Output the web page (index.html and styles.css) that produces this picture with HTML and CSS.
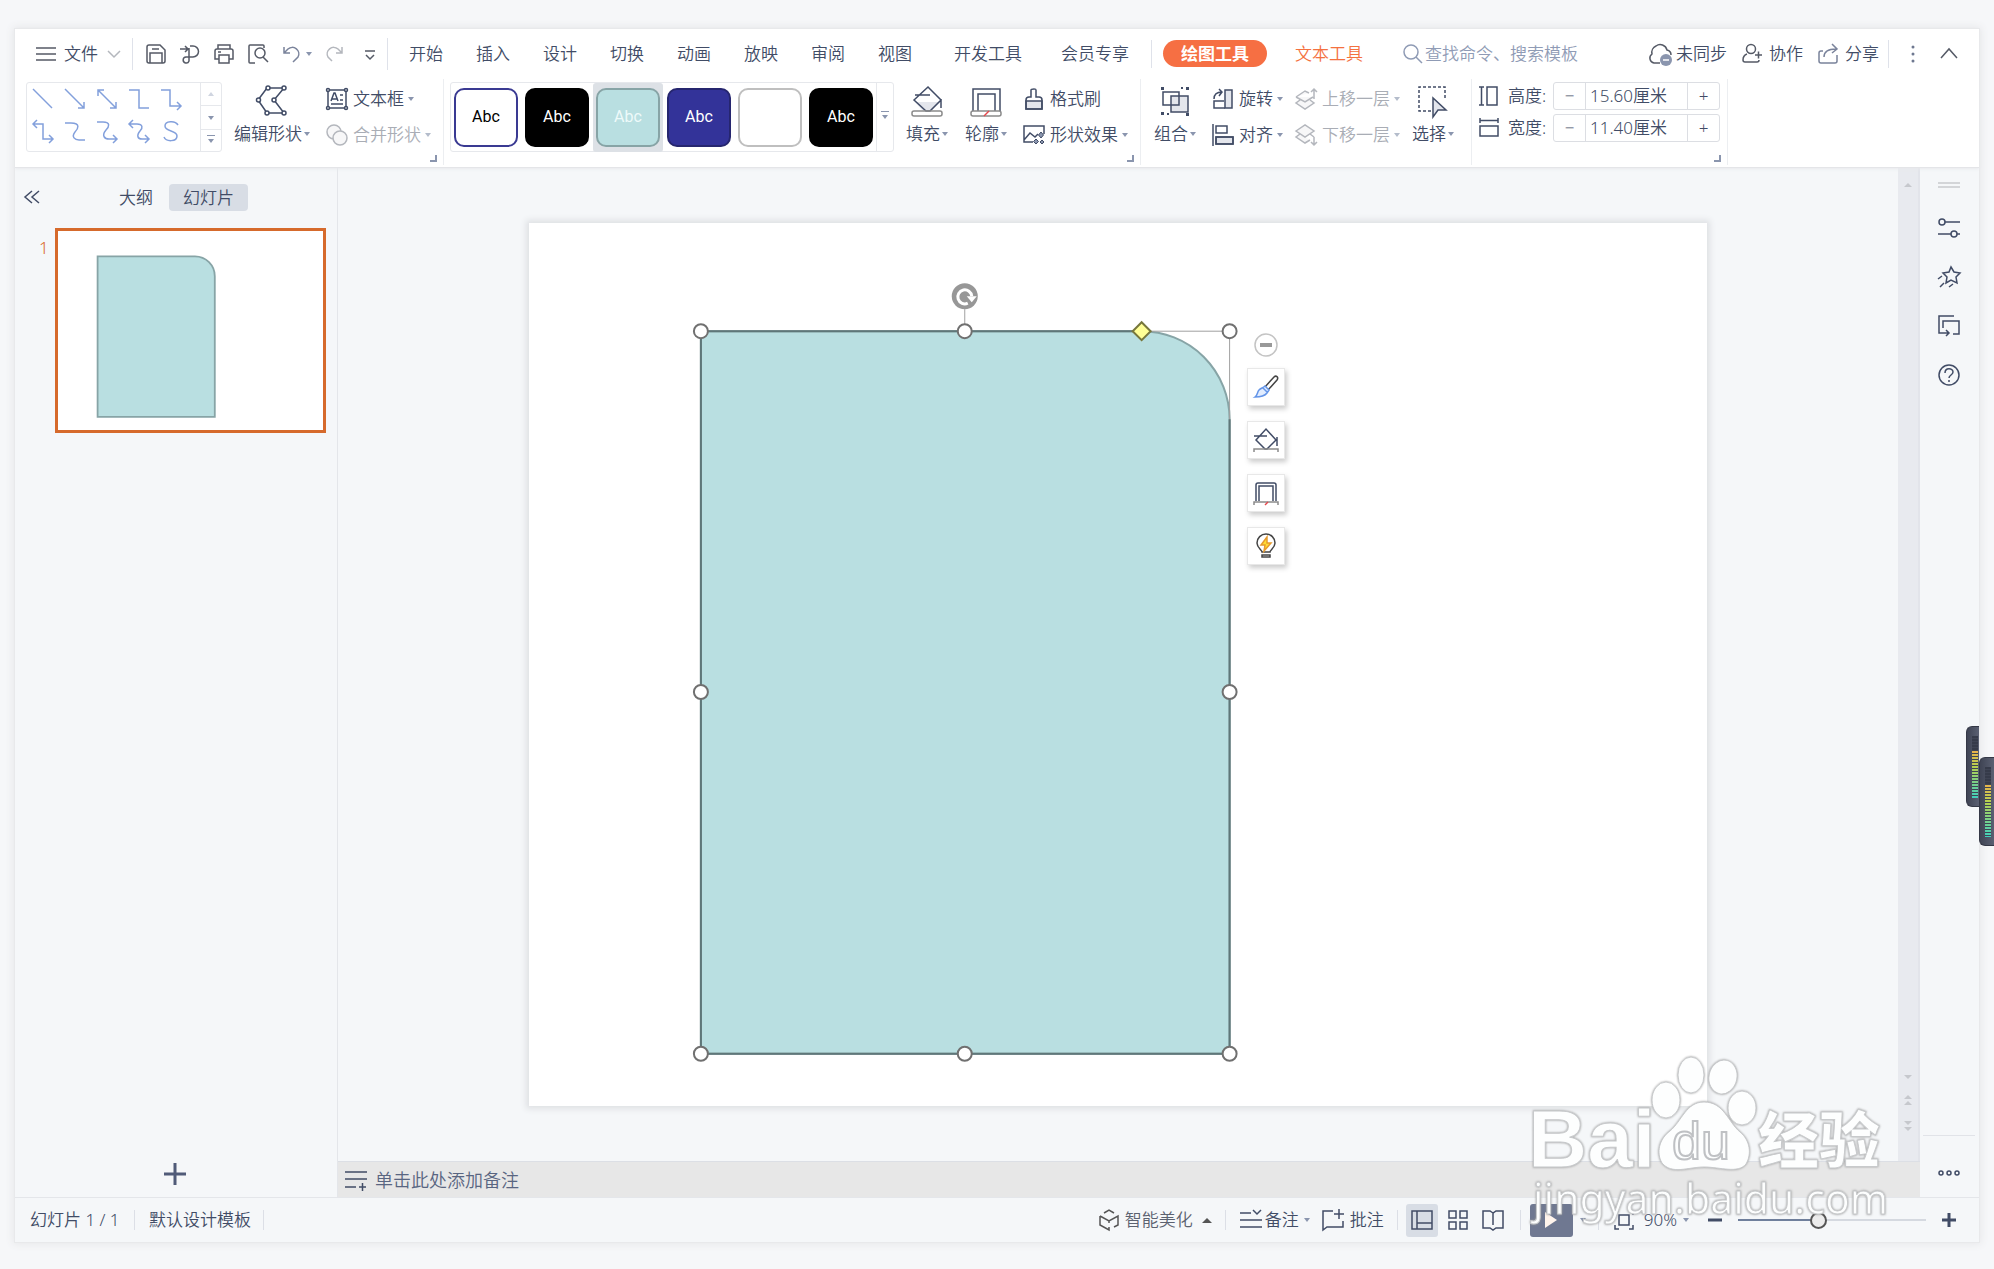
FILE: index.html
```html
<!DOCTYPE html>
<html lang="zh-CN">
<head>
<meta charset="utf-8">
<title>演示文稿</title>
<link rel="stylesheet" href="styles.css">
</head>
<body>
<div class="app">
  <header class="header">
    <div class="menubar">
      <button class="file-btn" type="button">
        <svg class="i20" viewBox="0 0 20 20"><path d="M0 4h20M0 10h20M0 16h20"/></svg>
        <span>文件</span>
        <svg class="i14" viewBox="0 0 14 14"><path class="pale" d="M1 4l6 6 6-6"/></svg>
      </button>
      <span class="vline"></span>
      <div class="quick">
        <button type="button" aria-label="保存"><svg class="i20" viewBox="0 0 20 20"><path d="M1 3a2 2 0 0 1 2-2h11l5 5v11a2 2 0 0 1-2 2H3a2 2 0 0 1-2-2zM4 19V9h12v10M6 5h7"/></svg></button>
        <button type="button" aria-label="输出"><svg class="i20" viewBox="0 0 20 20"><path d="M0 5h8M5 2l3 3-3 3M10 2h3a5 5 0 0 1 0 11H6a3 3 0 1 0 3 4V4"/></svg></button>
        <button type="button" aria-label="打印"><svg class="i20" viewBox="0 0 20 20"><path d="M4 5V1h12v4M5 15H1V7a2 2 0 0 1 2-2h14a2 2 0 0 1 2 2v8h-4M5 11h10v8H5zM4 8h3"/></svg></button>
        <button type="button" aria-label="打印预览"><svg class="i20" viewBox="0 0 20 20"><path d="M7 19H2a1 1 0 0 1-1-1V2a1 1 0 0 1 1-1h13a1 1 0 0 1 1 1v2M15 13l5 5"/><circle cx="12" cy="9" r="5"/></svg></button>
        <button type="button" class="undo" aria-label="撤销"><svg class="i20" viewBox="0 0 20 20"><path class="slate" d="M2 3v6h6M2 9l4-4a6.500 6.500 0 0 1 10 8l-5 5"/></svg><i class="caret"></i></button>
        <button type="button" aria-label="恢复"><svg class="i20" viewBox="0 0 20 20"><path class="pale" d="M16 3v6h-6M16 9l-4-4a6.500 6.500 0 0 0-10 8l4 4"/></svg></button>
        <button type="button" aria-label="自定义"><svg class="i20" viewBox="0 0 20 20"><path d="M5 7h10M6 11l4 4 4-4"/></svg></button>
      </div>
      <span class="vline"></span>
      <nav class="tabs">
        <a href="#">开始</a><a href="#">插入</a><a href="#">设计</a><a href="#">切换</a><a href="#">动画</a><a href="#">放映</a><a href="#">审阅</a><a href="#">视图</a>
      </nav>
      <nav class="tabs tabs-wide"><a href="#">开发工具</a><a href="#">会员专享</a></nav>
      <span class="vline short"></span>
      <nav class="tabs tabs-tools"><a class="active" href="#">绘图工具</a><a class="orange" href="#">文本工具</a></nav>
      <label class="search">
        <svg class="i20" viewBox="0 0 20 20"><g class="haze"><circle cx="8" cy="8" r="7"/><path d="M13 13l6 6"/></g></svg>
        <input type="text" placeholder="查找命令、搜索模板" aria-label="搜索">
      </label>
      <div class="account">
        <button type="button" class="sync"><svg class="i24" viewBox="0 0 24 24"><path d="M12 21H6a5 5 0 0 1-2-9 7 7 0 0 1 4-8 7 7 0 0 1 11 4 5 5 0 0 1 4 5"/><circle cx="18" cy="18" r="6" class="solid-slate"/><path class="white" d="M15 18h6"/></svg><span>未同步</span></button>
        <button type="button"><svg class="i21" viewBox="0 0 21 21"><circle cx="9" cy="6" r="4.500"/><path d="M5 11c-3 1-4 4-4 6 0 1 1 2 2 2h12c1 0 2-1 2-2M13 12h7M16.500 8.500v7"/></svg><span>协作</span></button>
        <button type="button"><svg class="i21" viewBox="0 0 21 21"><path class="slate" d="M5 8H3a2 2 0 0 0-2 2v8a2 2 0 0 0 2 2h14a2 2 0 0 0 2-2v-6M6 14c0-5 3-8 12-8M14 1l5 5-5 4"/></svg><span>分享</span></button>
        <span class="vline short"></span>
        <button type="button" class="dots" aria-label="更多"><svg width="4" height="20" viewBox="0 0 4 20"><g class="fill-slate"><circle cx="2" cy="3" r="1.500"/><circle cx="2" cy="10" r="1.500"/><circle cx="2" cy="17" r="1.500"/></g></svg></button>
        <button type="button" class="collapse" aria-label="收起功能区"><svg width="18" height="18" viewBox="0 0 18 18"><path d="M1 13l8-9 8 9"/></svg></button>
      </div>
    </div>

    <div class="ribbon">
      <section class="group g-shape">
        <div class="lines">
          <div class="line-grid">
            <button type="button" aria-label="直线"><svg class="i20" viewBox="0 0 20 20"><path d="M0 0l19 19"/></svg></button>
            <button type="button" aria-label="箭头"><svg class="i20" viewBox="0 0 20 20"><path d="M0 0l19 19M19 13v6h-6"/></svg></button>
            <button type="button" aria-label="双箭头"><svg class="i20" viewBox="0 0 20 20"><path d="M1 1l18 18M19 13v6h-6M1 7V1h6"/></svg></button>
            <button type="button" aria-label="肘形"><svg class="i20" viewBox="0 0 20 20"><path d="M0 1h10v18h10"/></svg></button>
            <button type="button" aria-label="肘形箭头"><svg class="i20" viewBox="0 0 20 20"><path d="M0 1h9v16h10M16 13l4 4-4 4"/></svg></button>
            <button type="button" aria-label="肘形双箭头"><svg class="i20" viewBox="0 0 20 20"><path d="M1 3h9v15h9M4-1L0 3l4 4M16 14l4 4-4 4"/></svg></button>
            <button type="button" aria-label="曲线"><svg class="i20" viewBox="0 0 20 20"><path d="M0 2h6c10 0 7 6 4 9-4 5 0 8 4 8h6"/></svg></button>
            <button type="button" aria-label="曲线箭头"><svg class="i20" viewBox="0 0 20 20"><path d="M0 1h6c8 0 6 5 3 8-5 6-1 9 3 9h7M16 14l4 4-4 4"/></svg></button>
            <button type="button" aria-label="曲线双箭头"><svg class="i20" viewBox="0 0 20 20"><path d="M1 3h7c6 0 6 4 3 7-4 5-2 8 2 8h6M4-1L0 3l4 4M16 14l4 4-4 4"/></svg></button>
            <button type="button" aria-label="自由曲线"><svg class="i20" viewBox="0 0 20 20"><path d="M17 4c-3-5-13-4-13 1 0 6 12 4 12 10 0 6-11 6-13 1"/></svg></button>
          </div>
          <div class="scroll-col">
            <button type="button" aria-label="上一行"><i class="caret up faint"></i></button>
            <button type="button" aria-label="下一行"><i class="caret"></i></button>
            <button type="button" aria-label="更多线条"><i class="caret bar"></i></button>
          </div>
        </div>
        <button type="button" class="big edit"><svg class="i32" viewBox="0 0 32 32"><path d="M11 3h17M28 3L18 15M18 15l10 13M28 28H11M11 28L2 15M2 15L11 3"/><g class="node"><circle cx="12" cy="3" r="2"/><circle cx="28" cy="3" r="2"/><circle cx="18" cy="15" r="2"/><circle cx="2.500" cy="15" r="2"/><circle cx="11" cy="28" r="2"/><circle cx="28" cy="28" r="2"/></g></svg><span class="lbl">编辑形状<i class="caret"></i></span></button>
        <div class="stack">
          <button type="button" class="small"><svg class="i22" viewBox="0 0 22 22"><path d="M2 2h18v18H2zM5 13l3-8h1l3 8M6 11h5M14 7h3M14 12h3M5 16h12"/><g class="node"><circle cx="2" cy="2" r="1.500"/><circle cx="20" cy="2" r="1.500"/><circle cx="2" cy="20" r="1.500"/><circle cx="20" cy="20" r="1.500"/></g></svg><span>文本框</span><i class="caret"></i></button>
          <button type="button" class="small off"><svg class="i22" viewBox="0 0 22 22"><circle cx="8" cy="8" r="7"/><circle cx="14" cy="14" r="7"/></svg><span>合并形状</span><i class="caret"></i></button>
        </div>
        <i class="launcher"></i>
      </section>

      <section class="group g-style">
        <div class="styles">
          <button type="button" class="tile t-outline">Abc</button>
          <button type="button" class="tile t-black">Abc</button>
          <span class="picked"><button type="button" class="tile t-teal">Abc</button></span>
          <button type="button" class="tile t-navy">Abc</button>
          <button type="button" class="tile t-empty" aria-label="无填充"></button>
          <button type="button" class="tile t-black">Abc</button>
          <button type="button" class="styles-more" aria-label="更多样式"><i class="caret bar"></i></button>
        </div>
        <button type="button" class="big"><svg class="i32" viewBox="0 0 32 32"><path class="tint" stroke="none" d="M4 17h26L20 26h-8z"/><path d="M3 15L17 2l13 13-11 11h-4zM4 10h15M30 14v9"/><rect class="grey" x="1" y="26" width="30" height="5" rx="2"/></svg><span class="lbl">填充<i class="caret"></i></span></button>
        <button type="button" class="big outline"><svg class="i32" viewBox="0 0 32 32"><path d="M3 26V4h27v22M8 26V9h17v17"/><rect class="grey" x="1" y="26" width="30" height="5" rx="2"/><path class="red" d="M14 31l5-5"/></svg><span class="lbl">轮廓<i class="caret"></i></span></button>
        <div class="stack">
          <button type="button" class="small"><svg class="i22" viewBox="0 0 22 22"><path class="tint" d="M3 13h16v8H3z"/><path d="M3 21V12c0-2 1-3 3-3h2V2c0-1 1-1 3-1s2 0 2 1v7h3c2 0 3 1 3 3v9z"/></svg><span>格式刷</span></button>
          <button type="button" class="small"><svg class="i22" viewBox="0 0 22 22"><path d="M10 18H1V2h20v8M1 16l6-7 5 4 3-3"/><path class="spark" d="M18 8l2.500 3-2.500 3-2.500-3zM13 15l2.500 2.500L13 20l-2.500-2.500zM19 16l2 2-2 2-2-2z"/></svg><span>形状效果</span><i class="caret"></i></button>
        </div>
        <i class="launcher"></i>
      </section>

      <section class="group g-arrange">
        <button type="button" class="big"><svg class="i32" viewBox="0 0 32 32"><path class="tint" stroke="none" d="M12 11h17v16H12z"/><path d="M4 7h16v13H4zM12 11h17v16H12z"/><path class="dot" d="M2 2h3v3H2zM22 2h2v2h-2zM27 2h3v3h-3zM2 27h3v3H2zM8 28h2v2H8zM27 28h3v3h-3z"/></svg><span class="lbl">组合<i class="caret"></i></span></button>
        <div class="stack">
          <button type="button" class="small"><svg class="i22" viewBox="0 0 22 22"><path class="tint" d="M13 2h7v18h-7z"/><path d="M12 13H2v7h11M2 11c0-4 2-7 8-7M7 1l3 3-3 4"/></svg><span>旋转</span><i class="caret"></i></button>
          <button type="button" class="small"><svg class="i22" viewBox="0 0 22 22"><path class="tint" d="M4 13h17v7H4z"/><path d="M1 0v22M4 2h11v7H4zM4 13h17v7H4z"/></svg><span>对齐</span><i class="caret"></i></button>
        </div>
        <div class="stack near">
          <button type="button" class="small off"><svg class="i22" viewBox="0 0 22 22"><path d="M1 9l9-6 4 2M1 9l9 5 8-5M5 12l-4 3 9 6 9-6-4-3M19 11V1M16 4l3-3 3 3"/></svg><span>上移一层</span><i class="caret"></i></button>
          <button type="button" class="small off"><svg class="i22" viewBox="0 0 22 22"><path d="M1 7l9-6 9 6-9 6zM5 10l-4 3 9 6 5-3M15 10l4 3M19 13v8M16 18l3 3 3-3"/></svg><span>下移一层</span><i class="caret"></i></button>
        </div>
        <button type="button" class="big pick"><svg class="i32" viewBox="0 0 32 32"><path stroke-dasharray="3 2" d="M14 26H2V2h26v13"/><path class="tint" d="M16 13v19l5-7h8z"/></svg><span class="lbl">选择<i class="caret"></i></span></button>
      </section>

      <section class="group g-size">
        <div class="field">
          <svg class="i20" viewBox="0 0 20 20"><path d="M0 1h5M2.500 1v18M0 19h5M8 1h10v18H8z"/></svg>
          <label for="h">高度:</label>
          <div class="spin"><button type="button" aria-label="减小高度">−</button><input id="h" type="text" value="15.60厘米"><button type="button" aria-label="增大高度">+</button></div>
        </div>
        <div class="field">
          <svg class="i20" viewBox="0 0 20 20"><path d="M1 0v5M1 2.500h18M19 0v5M1 8h18v10H1z"/></svg>
          <label for="w">宽度:</label>
          <div class="spin"><button type="button" aria-label="减小宽度">−</button><input id="w" type="text" value="11.40厘米"><button type="button" aria-label="增大宽度">+</button></div>
        </div>
        <i class="launcher"></i>
      </section>
    </div>
  </header>

  <main class="main">
    <aside class="sidebar">
      <div class="side-head">
        <button type="button" class="fold" aria-label="折叠"><svg width="16" height="16" viewBox="0 0 16 16"><path d="M8 1L1 7l7 6M15 1L8 7l7 6"/></svg></button>
        <button type="button" class="side-tab">大纲</button>
        <button type="button" class="side-tab on">幻灯片</button>
      </div>
      <div class="thumb-row">
        <span class="num">1</span>
        <div class="thumb"><svg viewBox="0 0 1178 883"><path class="shape thick" d="M176 113H609A88 88 0 0 1 697 201V826H176z"/></svg></div>
      </div>
      <button type="button" class="add" aria-label="新建幻灯片"><svg class="i22" viewBox="0 0 22 22"><path d="M0 11h22M11 0v22"/></svg></button>
    </aside>

    <div class="center">
      <div class="work">
        <div class="canvas">
          <div class="slide">
            <svg class="drawing" viewBox="0 0 1178 883">
              <path class="shape" d="M172 108H613A88 88 0 0 1 701 196V831H172z"/>
              <rect class="bounds" x="172" y="108" width="529" height="723"/>
              <path class="bounds" d="M436 86v16"/>
              <path class="edge" d="M613 108H172V831H701V196"/>
              <circle class="rot" cx="436" cy="73" r="13"/>
              <path class="rot-arrow" d="M439 80a7 7 0 1 1 4-7"/><path class="rot-head" d="M438 73h10l-5 6z"/>
              <g class="handle"><circle cx="172" cy="108" r="7"/><circle cx="436" cy="108" r="7"/><circle cx="701" cy="108" r="7"/><circle cx="172" cy="469" r="7"/><circle cx="701" cy="469" r="7"/><circle cx="172" cy="831" r="7"/><circle cx="436" cy="831" r="7"/><circle cx="701" cy="831" r="7"/></g>
              <path class="adjust" d="M613 99l9 9-9 9-9-9z"/>
            </svg>
            <div class="floaters">
              <button type="button" class="round" aria-label="收起"><svg width="24" height="24" viewBox="0 0 24 24"><circle cx="12" cy="12" r="11"/><path d="M6 12h12"/></svg></button>
              <button type="button" aria-label="样式"><svg class="i26" viewBox="0 0 26 26"><path class="dark" d="M12 13L21 3c2-2 5 0 3 3l-9 10z"/><path class="blue" d="M12 12l4 4-2 3c-3 4-8 4-12 4 3-2 2-5 4-7 2-2 4-2 6-4zM10 14l4 4"/></svg></button>
              <button type="button" aria-label="填充"><svg class="i26" viewBox="0 0 26 26"><path d="M3 13L13 2l10 11-9 9h-2zM1 9h13M24 10v9"/><path class="grey" d="M1 25v-3h24v3"/></svg></button>
              <button type="button" aria-label="轮廓"><svg class="i26" viewBox="0 0 26 26"><path d="M3 21V5a2 2 0 0 1 2-2h16a2 2 0 0 1 2 2v16M6 21V6h14v15"/><path class="grey" d="M1 25v-3h24v3"/><path class="red" d="M12 25l3-3"/></svg></button>
              <button type="button" aria-label="智能"><svg class="i26" viewBox="0 0 26 26"><path class="dark" d="M9 19c0-2-5-4-5-9a9 9 0 0 1 18 0c0 5-5 7-5 9zM9 22h8v2H9z"/><path class="bolt" d="M14 4l-6 8h4l-1 6 7-8h-4z"/></svg></button>
            </div>
          </div>
        </div>
        <div class="vscroll">
          <i class="caret up mute"></i>
          <div class="vbottom"><i class="caret mute"></i><span><i class="caret up mute"></i><i class="caret up mute"></i></span><span><i class="caret mute"></i><i class="caret mute"></i></span></div>
        </div>
      </div>
      <div class="notes"><svg class="i22" viewBox="0 0 22 22"><path d="M0 3h22M0 10h22M0 18h11M14 18h7M17.500 14v8"/></svg><span>单击此处添加备注</span></div>
    </div>

    <aside class="rail">
      <span class="grip"></span>
      <button type="button" aria-label="属性"><svg class="i22" viewBox="0 0 22 22"><path d="M7 5h15M0 17h13M19 17h3"/><circle cx="4" cy="5" r="3"/><circle cx="16" cy="17" r="3"/></svg></button>
      <button type="button" aria-label="动画"><svg class="i22" viewBox="0 0 22 22"><path d="M13 1l3 5 6 1-4 4 1 6-6-3-5 3 1-6-4-4 6-1zM0 13l4-3M2 21l4-4M11 21l4-3"/></svg></button>
      <button type="button" aria-label="切换"><svg class="i22" viewBox="0 0 22 22"><path d="M16 1H1v17h10M8 15l3 3-3 3M5 13V6h16v13h-6"/></svg></button>
      <button type="button" aria-label="帮助"><svg class="i22" viewBox="0 0 22 22"><circle cx="11" cy="11" r="10"/><path d="M7 9c0-6 8-5 8-1 0 3-4 3-4 6M11 16v2"/></svg></button>
      <button type="button" class="rail-more" aria-label="更多"><svg class="i22" viewBox="0 0 22 22"><circle cx="3" cy="11" r="2"/><circle cx="11" cy="11" r="2"/><circle cx="19" cy="11" r="2"/></svg></button>
    </aside>
  </main>

  <footer class="status">
    <span class="s-page">幻灯片 1 / 1</span>
    <span class="vline tiny"></span>
    <span class="s-tpl">默认设计模板</span>
    <span class="vline tiny"></span>
    <div class="s-right">
      <button type="button" class="beauty"><svg class="i20" viewBox="0 0 20 20"><path class="dim" d="M5 3l5-3 5 3M1 6l9 5 9-5v9l-4 2M1 6v9l9 5v-3M10 11v2"/></svg><span>智能美化</span><i class="caret up dark"></i></button>
      <span class="vline tiny"></span>
      <button type="button" class="s-note"><svg class="i22" viewBox="0 0 22 22"><path d="M0 4h11M0 11h22M0 18h22M13 1l4 4 4-4"/></svg><span>备注</span><i class="caret"></i></button>
      <button type="button" class="s-comment"><svg class="i22" viewBox="0 0 22 22"><path d="M11 2H1v19l4-3h16v-6M17 0v10M12 5h10"/></svg><span>批注</span></button>
      <span class="vline tiny"></span>
      <div class="views">
        <button type="button" class="view on" aria-label="普通视图"><svg class="i22" viewBox="0 0 22 22"><path d="M1 2h20v18H1zM6 2v18M6 14h15"/></svg></button>
        <button type="button" class="view-grid" aria-label="幻灯片浏览"><svg class="i20" viewBox="0 0 20 20"><path d="M1 1h7v7H1zM12 1h7v7h-7zM1 12h7v7H1zM12 12h7v7h-7z"/></svg></button>
        <button type="button" class="view-read" aria-label="阅读视图"><svg class="i22" viewBox="0 0 22 22"><path d="M11 4L8 2H1v17h7l3 2 3-2h7V2h-7zM11 4v12"/></svg></button>
      </div>
      <span class="vline tiny"></span>
      <button type="button" class="play" aria-label="播放"><svg width="14" height="18" viewBox="0 0 14 18"><path d="M1 1l12 8-12 8z"/></svg></button>
      <i class="caret play-caret"></i>
      <span class="vline tiny"></span>
      <button type="button" class="fit" aria-label="适应窗口"><svg class="i20" viewBox="0 0 20 20"><path d="M1 5V1h4M15 1h4v4M1 15v4h4M15 19h4v-4M5 5h10v10H5z"/></svg></button>
      <button type="button" class="zoom">90%<i class="caret"></i></button>
      <button type="button" class="z-minus" aria-label="缩小"><svg class="i14 bold" viewBox="0 0 14 14"><path d="M0 7h14"/></svg></button>
      <input class="slider" type="range" min="0" max="100" value="42" aria-label="缩放">
      <button type="button" class="z-plus" aria-label="放大"><svg class="i14 bold" viewBox="0 0 14 14"><path d="M0 7h14M7 0v14"/></svg></button>
    </div>
  </footer>
</div>

<div class="meter meter-a"><i></i></div>
<div class="meter meter-b"><i></i></div>

<svg class="watermark" width="370" height="190" viewBox="0 0 370 190">
  <g class="wm">
    <text class="wm-bai" x="0" y="121">Bai</text>
    <ellipse cx="138" cy="54" rx="14" ry="18"/><ellipse cx="163" cy="29" rx="13" ry="18"/><ellipse cx="195" cy="31" rx="14" ry="17" transform="rotate(12 195 31)"/><ellipse cx="214" cy="62" rx="14" ry="17"/>
    <path d="M176 56c20 0 24 20 36 30 10 8 12 22 6 32-8 10-26 3-42 3s-32 8-42-4c-6-10-3-24 8-32 12-10 16-29 34-29z"/>
    <text class="wm-du" x="144" y="113">du</text>
    <text class="wm-cn" x="230" y="117">经验</text>
    <text class="wm-url" x="5" y="168">jingyan.baidu.com</text>
  </g>
</svg>
</body>
</html>
```
FILE: styles.css
```css
* { box-sizing: border-box; }
body {
  margin: 0;
  padding: 29px 15px 27px;
  min-height: 100vh;
  position: relative;
  overflow-x: hidden;
  background: #f6f7f9;
  color: #414c66;
  font: 17px/22px "Noto Sans", "Noto Sans CJK SC", sans-serif;
  font-weight: 350;
}
button, input {
  font: inherit;
  color: inherit;
  background: none;
  border: 0;
  padding: 0;
  margin: 0;
}
button { display: flex; align-items: center; white-space: nowrap; flex: none; }
a { color: inherit; text-decoration: none; }
i { flex: none; }
svg { fill: none; stroke: #414c66; stroke-width: 1.5; flex: none; display: block; overflow: visible; }
.i14 { width: 14px; height: 14px; }
.i20 { width: 20px; height: 20px; }
.i21 { width: 21px; height: 21px; }
.i22 { width: 22px; height: 22px; }
.i24 { width: 24px; height: 24px; }
.i26 { width: 26px; height: 26px; }
.i32 { width: 32px; height: 32px; }
.pale { stroke: #b4b7bd; }
.slate { stroke: #7a839b; }
.haze { stroke: #8f9bb5; }
.white { stroke: #fff; }
.dim { stroke: #555; }
.grey { stroke: #8a8a8a; }
.red { stroke: #e5484d; }
.tint { fill: #e4e6ec; }
.solid-slate { fill: #8a95ae; stroke: none; }
.fill-slate { fill: #6e7890; stroke: none; }
.node { fill: #fff; }
.dot { fill: #414c66; stroke: none; }
.spark { stroke-width: 1; fill: #8a95ae; }
.bold { stroke-width: 3; }

.caret {
  display: inline-block;
  width: 0;
  border: solid transparent;
  border-width: 4px 3px 0;
  border-top-color: #8a95ae;
}
.caret.up { border-width: 0 3px 4px; border-bottom-color: #8a95ae; }
.caret.faint { border-bottom-color: #d0d5e0; }
.caret.mute { border-left-width: 4px; border-right-width: 4px; border-top-color: #c6c8cd; border-bottom-color: #c6c8cd; }
.caret.dark { border-width: 0 5px 5px; border-bottom-color: #555; }
.caret.bar { position: relative; }
.caret.bar::before {
  content: "";
  position: absolute;
  left: -4px;
  top: -8px;
  width: 8px;
  height: 1px;
  background: #8a95ae;
}
.vline { width: 1px; height: 32px; background: #dfe2ea; flex: none; }
.vline.short { height: 28px; }
.vline.tiny { height: 20px; background: #dcdfe6; }

.app {
  display: flex;
  flex-direction: column;
  min-height: calc(100vh - 56px);
  background: #f5f7f9;
  box-shadow: 0 0 0 1px #e8e9eb, 0 0 8px 2px #e6e7e9;
}
.header { background: #fff; border-bottom: 1px solid #e4e5e8; box-shadow: 0 1px 3px #e8e9ec; position: relative; }

.menubar { display: flex; align-items: center; height: 49px; padding: 0 21px; white-space: nowrap; }
.menubar svg { stroke: #555a66; }
.file-btn span { margin: 0 9px 0 8px; }
.file-btn + .vline { margin: 0 13px 0 11px; }
.quick { display: flex; align-items: center; gap: 14px; margin-right: 7px; }
.undo { gap: 4px; }
.tabs { display: flex; gap: 33px; margin-left: 21px; }
.tabs-wide { gap: 39px; margin: 0 22px 0 42px; }
.tabs-tools { gap: 28px; margin-left: 11px; align-items: center; }
.tabs .active { background: #f66f43; color: #fff; font-weight: 700; line-height: 27px; padding: 0 18px; border-radius: 14px; }
.orange { color: #f4713f; }
.search { display: flex; align-items: center; gap: 2px; margin-left: 40px; }
.search input { width: 160px; }
.search input::placeholder { color: #8f9bb5; opacity: 1; }
.account { display: flex; align-items: center; margin-left: auto; gap: 15px; }
.account button { gap: 6px; }
.account .sync { gap: 4px; }
.account .vline { margin-left: -6px; }
.account .dots { margin-left: 7px; }
.account .collapse { margin-left: 10px; }

.ribbon { display: flex; padding: 1px 0 2px; height: 89px; }
.group { display: flex; align-items: flex-start; position: relative; padding-top: 3px; border-right: 1px solid #eceef1; flex: none; }
.launcher { position: absolute; right: 6px; bottom: 3px; width: 7px; height: 7px; border: solid #8a95ae; border-width: 0 2px 2px 0; }
.g-shape { padding-left: 11px; padding-right: 12px; }
.g-style { padding-left: 6px; padding-right: 12px; }
.g-arrange { padding-left: 13px; padding-right: 17px; }
.g-size { flex-direction: column; gap: 4px; padding-left: 7px; padding-right: 7px; }

.lines { display: flex; width: 196px; height: 70px; border: 1px solid #e6e8ec; border-radius: 3px; }
.line-grid { display: grid; grid-template-columns: repeat(5, 32px); grid-auto-rows: 32px; flex: 1; padding-left: 6px; }
.line-grid svg { stroke: #83a0dc; }
.scroll-col { display: grid; grid-template-rows: 22px 24px 22px; width: 21px; border-left: 1px solid #e6e8ec; }
.scroll-col button { justify-content: center; }
.scroll-col button + button { border-top: 1px solid #e6e8ec; }

.big { flex-direction: column; gap: 6px; padding-top: 3px; margin-left: 12px; }
.lbl { display: flex; align-items: center; gap: 2px; }
.outline { margin-left: 17px; }
.g-arrange .big:first-child { margin-left: 0; }
.stack { display: flex; flex-direction: column; gap: 2px; margin-left: 16px; }
.stack.near { margin-left: 12px; }
.small { height: 34px; }
.small span { margin: 0 4px 0 5px; }
.off { color: #a9adb5; }
.off svg { stroke: #b4b7bd; fill: #f7f7f8; }
.off .caret { border-top-color: #b4bccb; }

.styles { display: flex; align-items: center; gap: 7px; width: 444px; height: 70px; padding: 0 0 0 3px; border: 1px solid #e6e8ec; border-radius: 3px; }
.tile { width: 64px; height: 59px; border-radius: 10px; justify-content: center; font-family: Roboto, sans-serif; font-size: 16px; font-weight: 400; border: 2px solid #000; }
.picked { padding: 5px 3px; margin: 0 -3px; background: #dde1e6; border-radius: 3px; }
.t-outline { color: #000; border-color: #3a3a92; }
.t-black { background: #000; color: #fff; }
.t-teal { background: #b9dfe1; color: #eefafa; border-color: #87a4a6; }
.t-navy { background: #333399; color: #fff; border-color: #26266f; }
.t-empty { border-color: #bfbfbf; }
.styles-more { flex: 1; align-self: stretch; justify-content: center; margin-left: -4px; border-left: 1px solid #e6e8ec; }

.field { display: flex; align-items: center; height: 28px; }
.field label { width: 45px; margin-left: 9px; }
.spin { display: flex; width: 167px; height: 28px; border: 1px solid #dcdee3; border-radius: 3px; }
.spin input { flex: 1; min-width: 0; padding-left: 4px; border: solid #dcdee3; border-width: 0 1px; }
.spin button { width: 31px; justify-content: center; }

.main { display: flex; flex: 1; min-height: 600px; }
.sidebar { display: flex; flex-direction: column; width: 323px; flex: none; border-right: 1px solid #e4e6ea; }
.side-head { display: flex; align-items: center; padding: 16px 0 17px 9px; }
.side-tab { height: 27px; padding: 0 14px; border-radius: 4px; margin-left: 2px; }
.fold { margin-right: 63px; }
.side-tab.on { background: #d8dde5; }
.thumb-row { display: flex; gap: 9px; padding: 0 11px 0 24px; }
.num { color: #d96c2c; padding-top: 8px; line-height: 24px; width: 7px; }
.thumb { flex: 1; border: 3px solid #d66a2c; background: #fff; }
.thumb svg { width: 100%; height: auto; }
.add { margin: auto auto 12px 149px; }
.add svg { stroke-width: 3; stroke: #505b78; }

.center { display: flex; flex-direction: column; flex: 1; min-width: 0; }
.work { display: flex; flex: 1; min-height: 0; }
.canvas { flex: 1; display: flex; justify-content: center; padding: 55px 0; }
.slide { position: relative; aspect-ratio: 4 / 3; background: #fff; box-shadow: 0 0 6px 3px #dfe1e4; }
.drawing { width: 100%; height: 100%; }
.shape { fill: #b9dfe1; stroke: #87a4a6; stroke-width: 2; }
.shape.thick { stroke-width: 8; }
.bounds { stroke: #a0a0a0; stroke-width: 1; }
.edge { stroke: #5f7779; stroke-width: 2; }
.rot { fill: #979797; stroke: none; }
.rot-arrow { stroke: #fff; stroke-width: 3; }
.rot-head { fill: #fff; stroke: none; }
.handle { fill: #fff; stroke: #707070; stroke-width: 2; }
.adjust { fill: #ffff96; stroke: #77773c; stroke-width: 2; }
.floaters { position: absolute; left: 61%; top: 12.5%; display: flex; flex-direction: column; gap: 15px; }
.floaters button { width: 38px; height: 38px; justify-content: center; background: #fff; border: 1px solid #e8e8e8; box-shadow: 2px 3px 5px #ccc; }
.floaters .round { height: 24px; margin-bottom: -4px; border: 0; background: none; box-shadow: none; }
.round svg { stroke: #c4c4c4; fill: #fff; }
.round path { stroke: #999; stroke-width: 4; }
.floaters .dark { stroke: #444; }
.blue { stroke: #6495e8; fill: #e2edff; }
.bolt { fill: #ffdc32; stroke: #e69a2e; }

.vscroll { display: flex; flex-direction: column; justify-content: space-between; align-items: center; width: 22px; padding: 15px 0 30px; background: #e8eaef; border-right: 2px solid #e2e4ea; }
.vbottom { display: flex; flex-direction: column; align-items: center; gap: 16px; }
.vbottom span { display: flex; flex-direction: column; gap: 2px; }

.notes { display: flex; align-items: center; gap: 8px; height: 36px; padding-left: 7px; background: #e7e7e7; border-top: 1px solid #dcdfe5; font-size: 18px; color: #596581; }

.rail { display: flex; flex-direction: column; align-items: center; gap: 27px; width: 59px; flex: none; padding: 14px 2px 0 0; }
.grip { width: 22px; height: 6px; border: solid #d3d5d8; border-width: 2px 0; margin-bottom: 2px; }
.rail-more { margin-top: auto; width: 52px; height: 62px; padding-top: 12px; justify-content: center; border-top: 1px solid #e1e3e8; }

.status { display: flex; align-items: center; height: 45px; padding: 0 23px 0 15px; border-top: 1px solid #e4e6ea; white-space: nowrap; }
.s-page { width: 104px; }
.s-tpl { margin: 0 12px 0 14px; }
.s-right { display: flex; align-items: center; margin-left: auto; }
.beauty { margin-right: 13px; color: #5c6270; }
.beauty span { margin: 0 9px 0 6px; }
.s-note { margin-left: 14px; }
.s-note span { margin: 0 5px 0 3px; }
.s-comment { margin: 0 13px 0 12px; gap: 6px; }
.views { display: flex; align-items: center; margin: 0 16px 0 8px; }
.view { width: 32px; height: 33px; border-radius: 3px; justify-content: center; }
.view.on { background: #d8dde5; }
.view-grid { margin: 0 14px 0 10px; }
.play { width: 43px; height: 33px; margin: 0 7px 0 9px; border-radius: 3px; background: #6f7891; justify-content: center; }
.play svg { fill: #fff4ec; stroke: none; }
.play-caret { margin-right: 12px; }
.fit { margin: 0 10px 0 15px; }
.zoom { gap: 6px; margin-right: 19px; }
.slider { appearance: none; width: 188px; height: 18px; margin: 0 16px; background: linear-gradient(90deg, #6f7f9c 43%, #d5d9e0 43%) center / 100% 2px no-repeat; }
.slider::-webkit-slider-thumb { appearance: none; width: 17px; height: 17px; border-radius: 50%; background: #ececec; border: 2px solid #555; }

.meter { position: absolute; background: linear-gradient(90deg, #3f4454, #5a6072); border: 1px solid #343846; border-right: 0; border-radius: 6px 0 0 6px; padding: 9px 0 8px 5px; }
.meter i { display: block; width: 6px; height: 100%; background: repeating-linear-gradient(#0000 0 2px, #3f4454 2px 3px), linear-gradient(#363b4a 25%, #e8b34c 25%, #b5d050 50%, #40d0bd); }
.meter-a { right: 15px; top: 726px; width: 13px; height: 81px; }
.meter-b { right: 0; top: 757px; width: 15px; height: 89px; }

.watermark { position: absolute; right: 96px; bottom: 33px; pointer-events: none; filter: drop-shadow(0 0 1px #999); }
.wm { fill: #fdfefe; stroke: #c8cacc; stroke-width: 1; }
.wm-bai { font: 700 82px "Liberation Sans", sans-serif; }
.wm-du { font: 400 52px "Liberation Sans", sans-serif; stroke: #bfc1c4; stroke-width: 2; }
.wm-cn { font: 900 61px "Noto Sans CJK SC", sans-serif; }
.wm-url { font: 400 41px "Noto Sans", sans-serif; }
```
